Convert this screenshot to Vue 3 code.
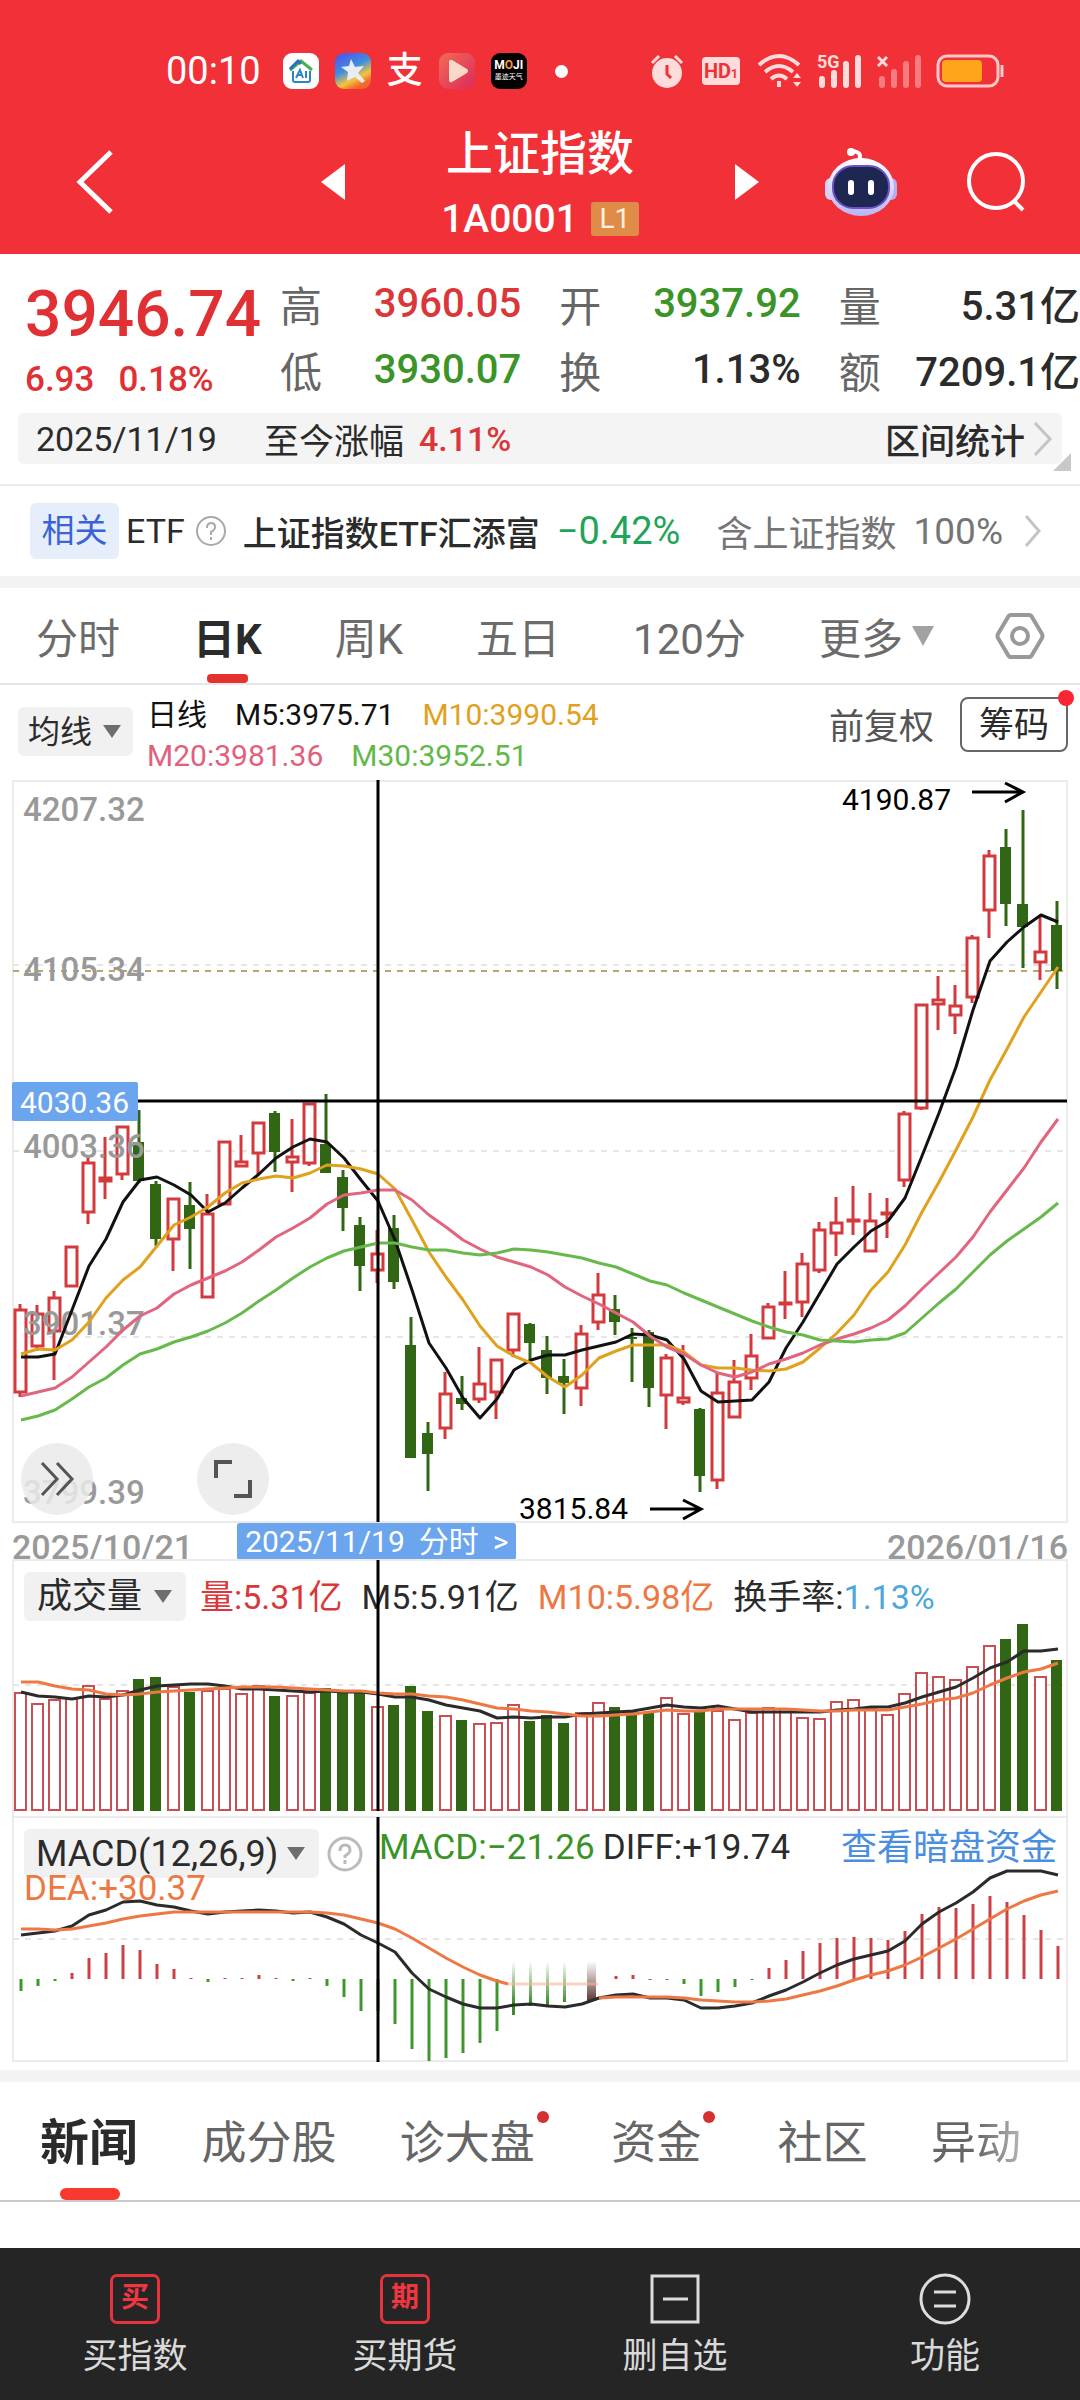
<script setup>
const tabs = ['分时', '日K', '周K', '五日', '120分']
const news = [
  { t: '新闻', on: true },
  { t: '成分股' },
  { t: '诊大盘', dot: true },
  { t: '资金', dot: true },
  { t: '社区' },
  { t: '异动', fade: true }
]
const step = 17
const cx = i => 20 + i * step

// up (1) or down (0), high, body top, body bottom, low
const candles = [
  [1,524,529,613,617],[1,525,533,567,571],[1,511,517,552,600],[1,466,466,507,507],[1,377,382,433,444],
  [1,357,397,402,419],[1,346,346,395,400],[0,330,362,401,403],[0,401,404,459,466],[1,418,418,460,491],
  [0,402,425,449,489],[1,414,433,518,518],[1,361,361,425,425],[1,355,381,387,387],[1,342,342,374,394],
  [0,331,333,372,392],[1,339,376,383,412],[1,323,323,384,386],[0,314,364,393,393],[0,390,397,428,451],
  [0,437,445,486,511],[1,450,473,491,503],[0,435,448,502,509],[0,537,565,678,678],[0,642,653,674,711],
  [1,592,613,649,659],[0,596,618,624,630],[1,567,603,620,623],[1,579,579,613,639],[1,533,533,571,577],
  [0,543,544,563,581],[0,556,570,598,614],[0,579,596,603,634],[1,545,553,609,626],[1,493,514,543,550],
  [0,515,529,542,555],[0,548,557,559,602],[0,550,552,608,627],[1,574,577,616,649],[1,565,617,623,625],
  [0,628,629,696,712],[1,592,612,701,709],[1,580,601,638,638],[1,554,575,599,610],[1,523,526,559,559],
  [1,491,522,524,539],[1,473,483,523,537],[1,442,449,491,493],[1,417,442,454,476],[1,406,439,441,455],
  [1,413,440,472,472],[1,418,432,434,458],[1,331,333,401,407],[1,224,224,329,330],[1,196,219,225,250],
  [1,205,225,236,254],[1,155,157,218,223],[1,70,75,131,158],[0,49,67,124,146],[0,30,124,147,188],
  [1,135,171,183,200],[0,121,145,191,209]
]
const m5 = [577,577,574,530,486,459,422,400,397,405,415,432,423,408,394,378,367,359,362,378,400,421,460,510,563,588,618,638,619,590,580,575,575,570,566,562,554,555,560,579,611,622,621,620,602,568,542,513,484,467,451,441,418,376,333,287,230,181,162,147,135,142]
const m10 = [574,569,570,560,542,518,500,487,466,445,437,427,413,403,399,396,398,393,385,386,389,394,409,440,472,497,520,546,566,576,583,597,607,595,578,571,565,565,565,572,585,588,588,590,591,589,582,568,553,535,510,492,465,432,402,370,337,300,269,237,212,187]
const m20 = [616,612,608,597,582,567,550,536,528,514,505,498,491,482,470,457,448,438,424,415,413,410,410,420,435,447,460,469,477,482,487,495,507,516,524,533,542,556,567,574,585,593,597,592,584,579,573,565,559,554,548,540,526,509,493,477,457,432,410,388,362,339]
const m30 = [640,636,630,619,607,598,585,574,569,562,557,551,543,533,521,510,498,487,478,471,467,463,463,467,470,470,473,475,473,469,470,472,475,478,483,487,494,501,505,513,520,527,534,541,547,552,555,560,561,562,560,559,553,538,523,509,492,475,461,449,437,423]

const vols = [132,143,139,138,125,138,130,119,117,126,132,130,128,133,125,136,135,132,128,132,133,146,145,126,151,155,160,163,162,144,161,155,163,152,142,147,152,152,137,153,152,150,159,152,147,148,157,158,141,139,148,154,133,112,116,119,106,85,79,64,116,100]
const v5 = [132,136,137,139,136,137,135,130,126,125,124,124,126,129,129,130,131,132,131,132,132,134,137,137,140,145,148,151,158,157,158,157,157,154,153,152,151,148,145,147,148,146,149,152,152,152,152,152,150,149,147,147,143,137,132,127,118,108,102,91,91,89]
const v10 = [122,122,126,129,130,134,135,134,132,131,130,129,128,127,127,127,128,129,130,131,131,133,134,134,136,137,140,144,148,149,151,152,154,156,156,155,154,152,150,151,151,149,149,149,149,149,150,151,151,150,150,150,147,144,140,138,133,125,118,112,109,103]

const zero = 162
const hist = [174,169,164,156,141,136,128,133,147,152,161,165,161,161,158,161,164,161,169,180,194,194,207,232,244,241,236,226,214,null,null,null,null,null,null,159,158,163,163,167,179,175,170,163,151,143,134,126,121,120,121,123,114,97,90,91,87,79,85,98,113,129]
const faded = [[29,198],[30,189],[31,188],[32,185]]
const diff = [118,116,114,109,98,93,85,84,88,90,94,97,95,94,93,94,96,95,100,107,118,126,135,156,172,180,187,191,191,188,187,189,190,187,181,178,177,181,181,183,191,191,189,186,179,173,165,156,148,142,138,134,124,107,95,86,75,61,54,54,54,58]
const deaA = [112,112,113,112,109,106,102,99,97,95,95,95,95,95,95,95,95,95,96,98,102,106,112,121,131,141,150,158,164]
const deaB = [181,180,180,180,180,181,183,184,185,185,184,182,178,174,169,163,158,154,148,140,131,122,112,102,92,84,78,74]
const line = (a, from = 0) => a.map((y, i) => cx(i + from) + 1 + ',' + y).join(' ')
</script>

<template>
  <div class="app">
    <header class="top">
      <div class="status">
        <div class="st-left">
          <time class="clock">00:10</time>
          <svg width="36" height="36" viewBox="0 0 36 36"><rect width="36" height="36" rx="9" fill="#fff"/><path d="M7 17 18 8l11 9" fill="none" stroke="#4cae4f" stroke-width="3"/><path d="M7 16l8-8 3 3" fill="none" stroke="#2273c6" stroke-width="3"/><path d="M10 18v9q0 2 2 2h13q2 0 2-2v-9" fill="none" stroke="#2a86c8" stroke-width="2"/><path d="m13 25 4-8 3 8m-5-3h4m4-4v7" fill="none" stroke="#2a86c8" stroke-width="2"/></svg>
          <svg width="36" height="36" viewBox="0 0 36 36"><defs><linearGradient id="ga" x1="0" y1="0" x2=".5" y2="1"><stop offset="0" stop-color="#554be8"/><stop offset=".5" stop-color="#3d8fe0"/><stop offset=".8" stop-color="#f4c43c"/><stop offset="1" stop-color="#f4662a"/></linearGradient></defs><rect width="36" height="36" rx="9" fill="url(#ga)"/><path d="m16 6 4 8 9-1-6 7 7 8-3 2-7-6-8 4 1-9-7-5 8-1z" fill="#e8ecf6"/></svg>
          <span class="zhi">支</span>
          <svg width="36" height="36" viewBox="0 0 36 36"><defs><linearGradient id="gb" x1="0" y1="0" x2="1" y2="1"><stop offset="0" stop-color="#f36a55"/><stop offset="1" stop-color="#dc2b5a"/></linearGradient></defs><rect width="36" height="36" rx="9" fill="url(#gb)"/><path d="M10 9q0-3 3-2l15 9q2 2 0 4l-15 9q-3 1-3-2z" fill="#fbd9c8"/></svg>
          <span class="moji"><b>M<em>O</em>JI</b><i>墨迹天气</i></span>
          <span class="more-dot"></span>
        </div>
        <div class="st-right">
          <svg width="36" height="36" viewBox="0 0 36 36"><circle cx="18" cy="20" r="15" fill="#ffdcdc"/><path d="M18 12v9l4 4" fill="none" stroke="#f13037" stroke-width="3"/><path d="m3 10 7-7m23 7-7-7" stroke="#ffdcdc" stroke-width="3"/></svg>
          <span class="hd">HD<small>1</small></span>
          <svg width="46" height="36" viewBox="0 0 46 36" fill="none" stroke="#ffdcdc" stroke-width="4"><path d="M2 12q20-18 40 0"/><path d="M8 19q14-12 28 0"/><path d="M14 26q8-7 16 0"/><path d="M22 28v6" /><path d="m36 25 4-5 4 5zm0 4 4 5 4-5z" fill="#ffdcdc" stroke="none"/></svg>
          <svg width="48" height="36" viewBox="0 0 48 36" stroke="#ffdcdc" stroke-width="6" stroke-linecap="round" class="open"><path d="M6 26v6M18 20v12M30 11v21M42 5v27"/><text x="1" y="15" class="g5">5G</text></svg>
          <svg width="46" height="36" viewBox="0 0 46 36"><path d="M5 26v6M17 19v13M29 11v21M41 5v27" stroke="#f77c80" stroke-width="6" stroke-linecap="round"/><path d="m1 4 9 9m0-9-9 9" stroke="#ffdcdc" stroke-width="3"/></svg>
          <svg width="68" height="34" viewBox="0 0 68 34"><rect x="2" y="2" width="60" height="30" rx="9" fill="none" stroke="#ffc9c9" stroke-width="3"/><rect x="6" y="6" width="40" height="22" rx="4" fill="#ffa51c"/><path d="M66 11v12" stroke="#ffc9c9" stroke-width="3"/></svg>
        </div>
      </div>
      <div class="bar">
        <div class="side">
          <button class="plain" aria-label="返回"><svg width="40" height="66" viewBox="0 0 40 66"><path d="M36 3 5 33l31 30" fill="none" stroke="#fff" stroke-width="5"/></svg></button>
        </div>
        <div class="mid">
          <button class="plain" aria-label="上一个"><svg width="24" height="36"><path d="M24 0v36L0 18z" fill="#fff"/></svg></button>
          <div class="name">
            <h1>上证指数</h1>
            <p>1A0001<span class="l1">L1</span></p>
          </div>
          <button class="plain" aria-label="下一个"><svg width="24" height="36"><path d="M0 0v36l24-18z" fill="#fff"/></svg></button>
        </div>
        <div class="side end">
          <button class="plain" aria-label="助手"><svg width="74" height="68" viewBox="0 0 74 68"><defs><linearGradient id="gr" x1="0" y1="0" x2="0" y2="1"><stop offset="0" stop-color="#fff"/><stop offset="1" stop-color="#b9b5f2"/></linearGradient></defs><path d="M35 12q4-8-7-9" fill="none" stroke="#fff" stroke-width="4" stroke-linecap="round"/><circle cx="27" cy="4" r="4" fill="#fff"/><rect x="1" y="30" width="14" height="22" rx="6" fill="#d5d2fa"/><rect x="59" y="30" width="14" height="22" rx="6" fill="#b7aef2"/><ellipse cx="37" cy="39" rx="33" ry="29" fill="url(#gr)"/><rect x="9" y="18" width="56" height="42" rx="20" fill="#1d2752" stroke="#6b50c8" stroke-width="2"/><rect x="24" y="32" width="6" height="15" rx="3" fill="#fff"/><rect x="44" y="32" width="6" height="15" rx="3" fill="#fff"/></svg></button>
          <button class="plain" aria-label="搜索"><svg width="60" height="60" viewBox="0 0 60 60" fill="none" stroke="#fff" stroke-width="4"><circle cx="30" cy="29" r="27"/><path d="m48 49 9 9"/></svg></button>
        </div>
      </div>
    </header>

    <section class="quote">
      <div class="figures">
        <div class="last">
          <strong>3946.74</strong>
          <p><span>6.93</span><span>0.18%</span></p>
        </div>
        <dl>
          <div><dt>高</dt><dd class="up">3960.05</dd></div>
          <div><dt>开</dt><dd class="down">3937.92</dd></div>
          <div><dt>量</dt><dd>5.31亿</dd></div>
          <div><dt>低</dt><dd class="down">3930.07</dd></div>
          <div><dt>换</dt><dd>1.13%</dd></div>
          <div><dt>额</dt><dd>7209.1亿</dd></div>
        </dl>
      </div>
      <a href="#range" class="range">
        <span>2025/11/19</span><span class="since">至今涨幅</span><span class="up pct">4.11%</span>
        <span class="stat">区间统计</span>
        <svg width="20" height="36" viewBox="0 0 20 36"><path d="m2 2 15 16L2 34" fill="none" stroke="#c4c4c4" stroke-width="3"/></svg>
        <i class="corner"></i>
      </a>
    </section>

    <a href="#etf" class="etf">
      <span class="rel">相关</span>
      <span class="e1">ETF</span>
      <svg class="q" width="32" height="32" viewBox="0 0 32 32"><circle cx="16" cy="16" r="14" fill="none" stroke="#a8a8a8" stroke-width="2"/><path d="M12 13q0-5 4-5t4 4q0 3-4 5v3m0 2v3" fill="none" stroke="#a8a8a8" stroke-width="2"/></svg>
      <span class="e2">上证指数ETF汇添富</span>
      <span class="e3">−0.42%</span>
      <span class="e4">含上证指数</span>
      <span class="e5">100%</span>
      <svg width="18" height="34" viewBox="0 0 18 34"><path d="m2 2 13 15L2 32" fill="none" stroke="#c4c4c4" stroke-width="3"/></svg>
    </a>

    <nav class="tabs">
      <button v-for="(t, i) in tabs" :key="t" class="plain" :class="{ on: i === 1 }">{{ t }}</button>
      <button class="plain more">更多<svg width="22" height="20"><path d="M0 0h22L11 20z" fill="#a2a2a2"/></svg></button>
      <button class="plain gear" aria-label="设置"><svg width="50" height="48" viewBox="0 0 50 48" fill="none" stroke="#999" stroke-width="4"><path d="M16 3h18q2 0 3 2l10 17q1 2 0 4L37 43q-1 2-3 2H16q-2 0-3-2L3 26q-1-2 0-4L13 5q1-2 3-2z"/><circle cx="25" cy="24" r="8"/></svg></button>
    </nav>

    <section class="ma">
      <label class="pick"><select aria-label="主图指标"><option>均线</option></select><i></i></label>
      <div class="ma-text">
        <p><span class="k">日线</span><span class="k">M5:3975.71</span><span class="c10">M10:3990.54</span></p>
        <p><span class="c20">M20:3981.36</span><span class="c30">M30:3952.51</span></p>
      </div>
      <button class="plain adj">前复权</button>
      <button class="chip">筹码<i></i></button>
    </section>

    <section class="panel">
      <svg class="plot" viewBox="0 0 1080 743">
        <rect x="13" y="1" width="1054" height="741" fill="none" stroke="#ebebeb" stroke-width="2"/>
        <path d="M13 185h1054M13 371h1054M13 557h1054" stroke="#e6e6e6" stroke-width="2" stroke-dasharray="6 6"/>
        <path d="M13 191h1054" stroke="#bda36c" stroke-width="2" stroke-dasharray="6 6"/>
        <g v-for="(c, i) in candles" :key="i">
          <template v-if="c[0]">
            <path :d="`M${cx(i)} ${c[1]}V${c[2]}M${cx(i)} ${c[3]}V${c[4]}`" stroke="#d23a3e" stroke-width="3"/>
            <rect :x="cx(i) - 5" :y="c[2] + 1" width="11" :height="Math.max(c[3] - c[2] - 2, 1)" fill="#fff" stroke="#d23a3e" stroke-width="3"/>
          </template>
          <template v-else>
            <path :d="`M${cx(i)} ${c[1]}V${c[4]}`" stroke="#306614" stroke-width="3"/>
            <rect :x="cx(i) - 6" :y="c[2]" width="11" :height="c[3] - c[2]" fill="#306614"/>
          </template>
        </g>
        <g class="axis">
          <text x="23" y="41">4207.32</text><text x="23" y="201">4105.34</text><text x="23" y="378">4003.36</text><text x="23" y="555">3901.37</text><text x="23" y="724">3799.39</text>
        </g>
        <g class="ma-line">
          <polyline :points="line(m5)" stroke="#111"/>
          <polyline :points="line(m10)" stroke="#e0a11c"/>
          <polyline :points="line(m20)" stroke="#e2647f"/>
          <polyline :points="line(m30)" stroke="#68b94c"/>
        </g>
        <path d="M378 0v742M13 321h1054" stroke="#000" stroke-width="3"/>
        <rect x="12" y="302" width="126" height="39" rx="2" fill="#6ba5ed"/>
        <text x="20" y="333" class="mark" fill="#fff">4030.36</text>
        <text x="842" y="30" class="mark">4190.87</text>
        <text x="519" y="739" class="mark">3815.84</text>
        <path d="M972 12h50M1005 3l18 9-18 10M650 729h50M683 720l18 9-18 10" fill="none" stroke="#000" stroke-width="3"/>
      </svg>
      <div class="tools">
        <button aria-label="展开"><svg width="36" height="36" viewBox="0 0 36 36"><path d="m3 2 15 16L3 34M18 2l15 16-15 16" fill="none" stroke="#555" stroke-width="3"/></svg></button>
        <button aria-label="全屏"><svg width="38" height="38" viewBox="0 0 38 38"><path d="M2 18V2h16M36 20v16H20" fill="none" stroke="#555" stroke-width="4"/></svg></button>
      </div>
    </section>

    <div class="dates">
      <time>2025/10/21</time>
      <button class="day"><span>2025/11/19</span><span>分时</span><span>&gt;</span></button>
      <time>2026/01/16</time>
    </div>

    <section class="panel">
      <div class="head">
        <label class="pick"><select aria-label="副图指标"><option>成交量</option></select><i></i></label>
        <span class="up vol">量:5.31亿</span><span>M5:5.91亿</span><span class="or">M10:5.98亿</span><span>换手率:<b>1.13%</b></span>
      </div>
      <svg class="plot" viewBox="0 0 1080 257">
        <rect x="13" y="0" width="1054" height="257" fill="none" stroke="#ebebeb" stroke-width="2"/>
        <path d="M13 125h1054" stroke="#e6e6e6" stroke-width="2" stroke-dasharray="6 6"/>
        <template v-for="(v, i) in vols" :key="i">
          <rect v-if="candles[i][0]" :x="cx(i) - 5" :y="v + 1" width="11" :height="249 - v" fill="#fff" stroke="#c94f55" stroke-width="2"/>
          <rect v-else :x="cx(i) - 6" :y="v" width="11" :height="251 - v" fill="#306614"/>
        </template>
        <g class="ma-line"><polyline :points="line(v5)" stroke="#2b2b2b"/><polyline :points="line(v10)" stroke="#ee7844"/></g>
        <path d="M378 0v251" stroke="#000" stroke-width="3"/>
      </svg>
    </section>

    <section class="panel">
      <div class="head macd">
        <label class="pick"><select aria-label="第二副图指标"><option>MACD(12,26,9)</option></select><i></i></label>
        <svg width="36" height="36" viewBox="0 0 36 36"><circle cx="18" cy="18" r="16" fill="none" stroke="#bbb" stroke-width="3"/><path d="M13 15q0-6 5-6t5 5q0 3-5 6v2m0 2v4" fill="none" stroke="#bbb" stroke-width="3"/></svg>
        <span class="g">MACD:−21.26</span><span class="d">DIFF:+19.74</span>
        <a href="#dark">查看暗盘资金</a>
        <p class="or">DEA:+30.37</p>
      </div>
      <svg class="plot" viewBox="0 0 1080 246">
        <defs>
          <linearGradient id="fg" x1="0" y1="144" x2="0" y2="186" gradientUnits="userSpaceOnUse"><stop offset="0" stop-color="#3d9a2c" stop-opacity="0"/><stop offset="1" stop-color="#3d8a2c"/></linearGradient>
          <linearGradient id="fb" x1="0" y1="0" x2="0" y2="1"><stop offset="0" stop-color="#6a4a45" stop-opacity="0"/><stop offset="1" stop-color="#5a3530"/></linearGradient>
        </defs>
        <rect x="13" y="0" width="1054" height="244" fill="none" stroke="#ebebeb" stroke-width="2"/>
        <path d="M13 122h1054" stroke="#e6e6e6" stroke-width="2" stroke-dasharray="6 6"/>
        <template v-for="(h, i) in hist" :key="i">
          <path v-if="h" :d="`M${cx(i) + 1} ${zero}V${h}`" :stroke="h < zero ? '#cc4145' : '#3f962e'" stroke-width="3"/>
        </template>
        <rect v-for="f in faded" :key="f[0]" :x="cx(f[0]) - 1" y="144" width="3" :height="f[1] - 144" fill="url(#fg)"/>
        <rect x="587" y="144" width="9" height="40" fill="url(#fb)"/>
        <g class="ma-line">
          <polyline :points="line(diff)" stroke="#2b2b2b"/>
          <polyline :points="line(deaA) + ' 508,167'" stroke="#ee7844"/>
          <path d="M508 167h90" stroke="#f6b79a" opacity=".6"/>
          <polyline :points="line(deaB, 34)" stroke="#ee7844"/>
        </g>
        <path d="M378 0v245" stroke="#000" stroke-width="3"/>
      </svg>
    </section>

    <nav class="news">
      <a v-for="n in news" :key="n.t" href="#news" :class="{ on: n.on, fade: n.fade, dotted: n.dot }">{{ n.t }}</a>
    </nav>
    <main class="feed"></main>

    <nav class="foot">
      <button class="plain"><span class="sq">买</span>买指数</button>
      <button class="plain"><span class="sq">期</span>买期货</button>
      <button class="plain"><svg width="50" height="50" viewBox="0 0 50 50" fill="none" stroke="#ddd" stroke-width="3"><path d="M2 2h46v46H2zM13 25h25"/></svg>删自选</button>
      <button class="plain"><svg width="52" height="52" viewBox="0 0 52 52" fill="none" stroke="#ddd" stroke-width="3"><circle cx="26" cy="26" r="24"/><path d="M15 19h22M15 33h22"/></svg>功能</button>
    </nav>
  </div>
</template>

<style>
body { margin: 0; background: #fff; }
</style>

<style scoped>
.app { font-family: Roboto, "Noto Sans CJK SC", sans-serif; font-size: 34px; color: #2b2b2b; overflow: hidden; }
* { box-sizing: border-box; }
p, h1, dl, dd { margin: 0; font-weight: inherit; }
a { color: inherit; text-decoration: none; }
svg { display: block; flex: none; }
.plain { background: none; border: 0; padding: 0; margin: 0; font: inherit; color: inherit; white-space: nowrap; }
.up { color: #d9373a !important; }
.down { color: #3a9427 !important; }

.top { background: #f13037; color: #fff; padding-top: 50px; }
.status { display: flex; justify-content: space-between; align-items: center; height: 42px; padding: 0 76px 0 166px; }
.st-left { display: flex; align-items: center; gap: 16px; }
.st-right { display: flex; align-items: center; gap: 13px; }
.clock { font-size: 38px; margin-right: 6px; }
.zhi { width: 36px; font-size: 36px; line-height: 36px; font-weight: 500; }
.moji { width: 36px; height: 36px; border-radius: 9px; background: #000; text-align: center; display: flex; flex-direction: column; justify-content: center; font-size: 12px; line-height: 13px; }
.moji em { color: #f59a2c; font-style: normal; }
.moji i { font-style: normal; font-size: 7px; line-height: 11px; }
.more-dot { width: 13px; height: 13px; border-radius: 50%; background: #fff; margin-left: 12px; }
.hd { width: 38px; height: 28px; margin: 0 4px; border-radius: 4px; background: #ffdcdc; color: #f13037; font-size: 20px; line-height: 28px; font-weight: 700; text-align: center; }
.hd small { font-size: 12px; }
.open { overflow: visible; }
.g5 { font-size: 18px; font-weight: 700; fill: #ffdcdc; stroke: none; }
.bar { display: grid; grid-template-columns: 1fr 438px 1fr; align-items: center; height: 162px; padding-top: 18px; }
.side { display: flex; align-items: center; padding-left: 75px; }
.end { justify-content: flex-end; gap: 68px; padding: 0 54px 0 0; }
.mid { display: flex; align-items: center; justify-content: space-between; }
.name { text-align: center; padding-top: 8px; }
h1 { font-size: 47px; line-height: 66px; font-weight: 500; }
.name p { display: flex; align-items: center; gap: 13px; font-size: 39px; line-height: 64px; font-weight: 500; }
.l1 { background: #e08c49; color: #fff3e0; font-size: 28px; line-height: 34px; width: 48px; border-radius: 3px; font-weight: 400; }

.quote { border-bottom: 2px solid #ebebeb; padding: 16px 0 20px; }
.figures { display: flex; }
.last { width: 280px; padding-left: 25px; color: #e03033; }
.last strong { display: block; font-size: 64px; line-height: 90px; font-weight: 500; }
.last p { display: flex; gap: 24px; font-size: 35px; line-height: 40px; font-weight: 500; }
dl { flex: 1; display: grid; grid-template-columns: repeat(3, 1fr); column-gap: 38px; grid-auto-rows: 66px; }
dl div { display: flex; justify-content: space-between; align-items: center; }
dt { font-size: 42px; color: #666; }
dd { font-size: 40px; font-weight: 500; white-space: nowrap; }
.range { position: relative; display: flex; align-items: center; margin: 11px 18px 0; padding: 0 9px 0 18px; height: 51px; background: #f4f4f4; border-radius: 6px; }
.since { font-size: 35px; margin-left: 47px; }
.pct { margin-left: 15px; font-weight: 500; }
.stat { margin-left: auto; margin-right: 8px; font-size: 35px; font-weight: 500; }
.corner { position: absolute; right: -9px; bottom: -7px; border: 9px solid transparent; border-right-color: #c8c8c8; border-bottom-color: #c8c8c8; }

.etf { display: flex; align-items: center; height: 90px; padding: 0 38px 0 30px; white-space: nowrap; }
.rel { background: #e6eefb; color: #3b63d6; border-radius: 6px; width: 89px; line-height: 56px; text-align: center; font-size: 33px; }
.e1 { margin-left: 7px; }
.q { margin-left: 10px; }
.e2 { margin-left: 16px; font-size: 34px; font-weight: 500; }
.e3 { margin-left: 17px; color: #1ea558; font-size: 38px; }
.e4 { margin-left: auto; color: #757575; font-size: 36px; }
.e5 { margin-left: 17px; margin-right: 21px; color: #757575; font-size: 37px; }

.tabs { display: flex; gap: 73px; align-items: stretch; height: 109px; border-top: 12px solid #f3f3f3; border-bottom: 2px solid #e6e6e6; padding: 0 35px 0 36px; font-size: 42px; color: #6b6b6b; }
.tabs button { position: relative; }
.tabs .on { color: #2b2b2b; font-weight: 700; }
.tabs .on::after { content: ""; position: absolute; left: 14px; right: 14px; bottom: 0; height: 9px; border-radius: 4px; background: #e5322f; }
.more { display: flex; align-items: center; gap: 9px; }
.tabs .gear { margin-left: -12px; }

.ma { display: flex; height: 95px; padding: 0 12px 0 18px; align-items: flex-start; }
.pick { position: relative; display: block; flex: none; }
.pick select { appearance: none; border: 0; margin: 0; background: #f1f1f1; border-radius: 6px; font: inherit; color: #2b2b2b; height: 49px; padding: 0 43px 0 13px; display: block; }
.pick i { position: absolute; right: 14px; top: 18px; border: solid transparent; border-width: 13px 9px 0; border-top-color: #6e6e6e; }
.ma .pick { margin-top: 22px; font-size: 32px; }
.ma .pick select { padding: 0 40px 0 10px; }
.ma .pick i { right: 12px; }
.ma-text { margin: 9px 0 0 14px; font-size: 30px; line-height: 41px; white-space: nowrap; }
.ma-text p { display: flex; gap: 28px; }
.k { color: #111; }
.c10 { color: #e2a01c; }
.c20 { color: #e2607c; }
.c30 { color: #63b84a; }
.adj { margin: 18px 26px 0 auto; font-size: 35px; line-height: 50px; color: #555; }
.chip { position: relative; margin: 12px 0 0; padding: 0; width: 108px; height: 55px; border: 2px solid #666; border-radius: 8px; background: #fff; font: inherit; font-size: 35px; line-height: 53px; color: #2b2b2b; }
.chip i { position: absolute; right: -8px; top: -9px; width: 16px; height: 16px; border-radius: 50%; background: #fa2535; }

.panel { display: grid; position: relative; }
.panel > * { grid-area: 1 / 1; }
.plot { width: 100%; height: auto; pointer-events: none; z-index: 1; overflow: visible; }
.axis { font-size: 33px; font-weight: 500; fill: #999; }
.mark { font-size: 30px; }
.ma-line { fill: none; stroke-width: 3; stroke-linejoin: round; }
.tools { z-index: 2; align-self: end; display: flex; gap: 104px; padding: 0 0 8px 21px; }
.tools button { width: 72px; height: 72px; border: 0; padding: 0; border-radius: 50%; background: rgba(234, 234, 234, .85); display: grid; place-items: center; }

.dates { display: flex; justify-content: space-between; align-items: flex-end; height: 37px; padding: 0 12px; color: #999; font-weight: 500; font-size: 34px; line-height: 26px; }
.day { display: flex; align-items: center; gap: 14px; height: 37px; margin: 0 auto 0 44px; padding: 0 8px; border: 0; border-radius: 3px; background: #6ba5ed; color: #fff; font: inherit; font-size: 30px; font-weight: 400; }

.head { display: flex; align-items: center; align-self: start; flex-wrap: wrap; padding: 12px 24px 0; white-space: nowrap; gap: 19px; line-height: 48px; }
.head .pick { font-size: 35px; }
.head .vol { margin-left: -5px; }
.or { color: #ee7844; }
.head b { color: #4ba7dc; font-weight: 400; }
.macd { column-gap: 8px; row-gap: 0; }
.macd .pick { font-size: 36px; }
.macd .pick select { padding: 0 40px 0 12px; }
.macd svg { margin: 0 8px 0 0; }
.g { color: #3a9427; }
.macd > span { margin-top: -12px; font-size: 35px; }
.macd a { margin-top: -12px; margin-left: auto; margin-right: -1px; font-size: 36px; color: #4a8ee0; }
.macd p { position: relative; width: 100%; line-height: 22px; font-size: 35px; }

.news { display: flex; height: 132px; margin-top: 7px; border-top: 12px solid #f3f3f3; border-bottom: 2px solid #c9c9c9; padding: 0 59px 0 40px; justify-content: space-between; font-size: 45px; line-height: 124px; color: #666; white-space: nowrap; }
.news a { position: relative; height: 118px; }
.news .on { font-size: 49px; font-weight: 700; color: #2b2b2b; }
.news .on::after { content: ""; position: absolute; left: 20px; right: 18px; bottom: 0; height: 12px; border-radius: 6px; background: #f8392f; }
.news .dotted { margin-right: 13px; }
.news .dotted::after { content: ""; position: absolute; right: -14px; top: 29px; width: 12px; height: 12px; border-radius: 50%; background: #d62f31; }
.news .fade { background: linear-gradient(90deg, #666 50%, #b5b5b5); background-clip: text; color: transparent; }
.feed { height: 46px; }

.foot { display: grid; grid-template-columns: repeat(4, 1fr); background: #252525; color: #d9d9d9; height: 153px; font-size: 35px; }
.foot button { display: flex; flex-direction: column; align-items: center; justify-content: flex-start; padding-top: 25px; line-height: 64px; }
.foot svg { height: 52px; }
.sq { width: 50px; height: 50px; margin: 1px 0; border: 3px solid #e4333b; border-radius: 7px; color: #f03640; font-size: 28px; line-height: 42px; font-weight: 700; }
</style>
